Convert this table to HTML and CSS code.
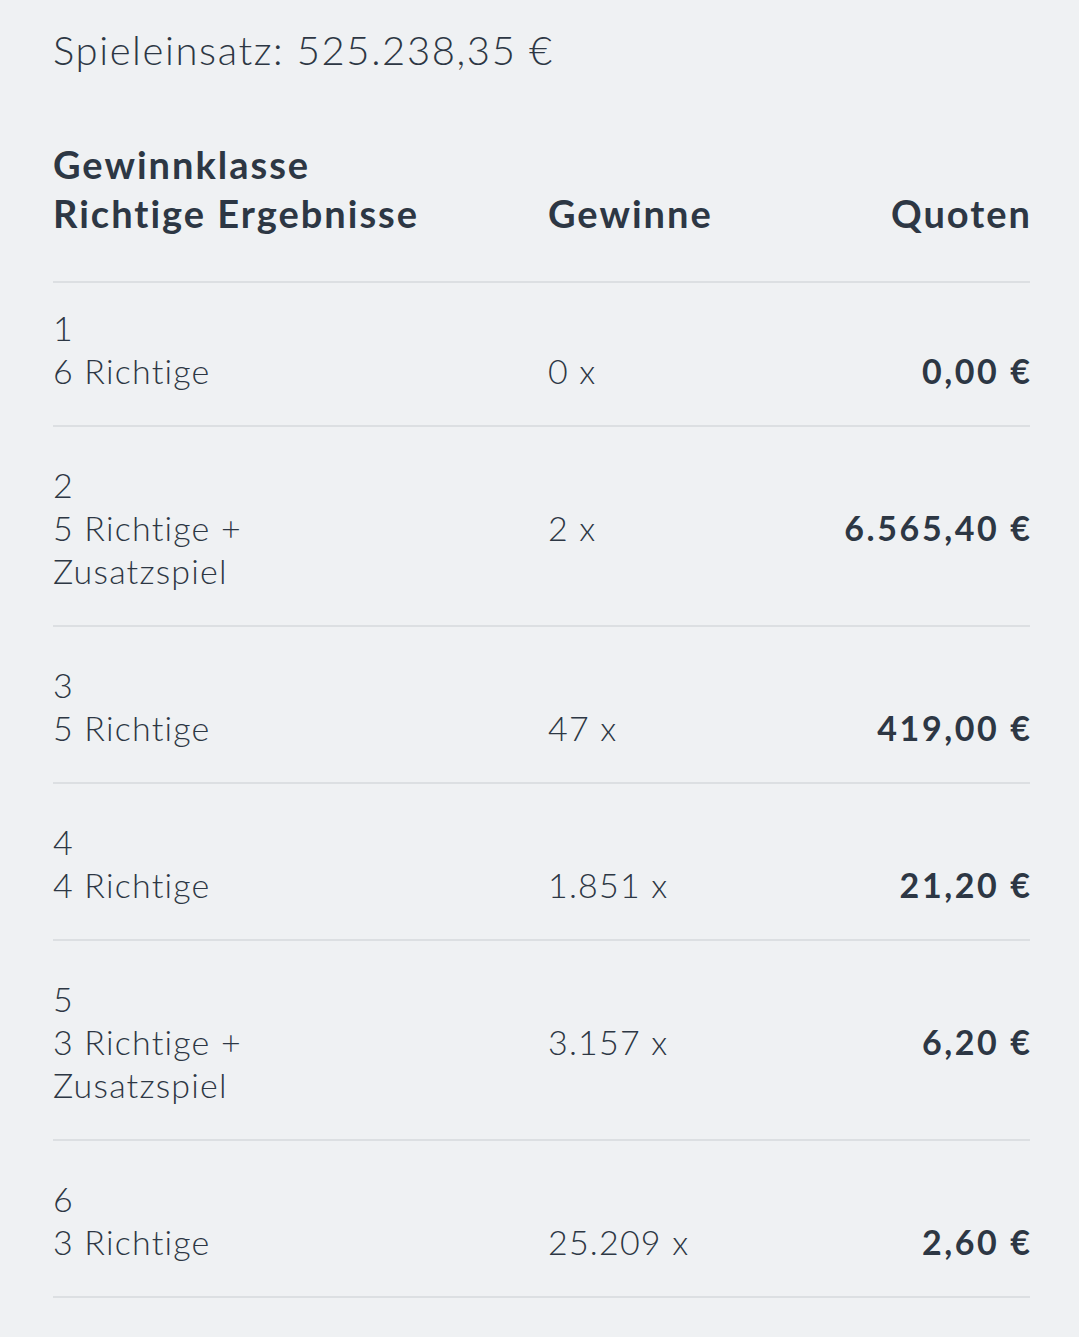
FILE: index.html
```html
<!DOCTYPE html>
<html lang="de">
<head>
<meta charset="utf-8">
<title>Quoten</title>
<link rel="stylesheet" href="styles.css">
</head>
<body>
<main class="page">
  <p class="stake">Spieleinsatz: 525.238,35 €</p>
  <div class="table">
    <div class="head">
      <div class="h-class">Gewinnklasse<br>Richtige Ergebnisse</div>
      <div class="h-count">Gewinne</div>
      <div class="h-quote">Quoten</div>
    </div>
    <div class="row first">
      <div class="num">1</div>
      <div class="desc">6 Richtige</div>
      <div class="count">0 x</div>
      <div class="quote">0,00 €</div>
    </div>
    <div class="row">
      <div class="num">2</div>
      <div class="desc">5 Richtige +<br>Zusatzspiel</div>
      <div class="count">2 x</div>
      <div class="quote">6.565,40 €</div>
    </div>
    <div class="row">
      <div class="num">3</div>
      <div class="desc">5 Richtige</div>
      <div class="count">47 x</div>
      <div class="quote">419,00 €</div>
    </div>
    <div class="row">
      <div class="num">4</div>
      <div class="desc">4 Richtige</div>
      <div class="count">1.851 x</div>
      <div class="quote">21,20 €</div>
    </div>
    <div class="row">
      <div class="num">5</div>
      <div class="desc">3 Richtige +<br>Zusatzspiel</div>
      <div class="count">3.157 x</div>
      <div class="quote">6,20 €</div>
    </div>
    <div class="row">
      <div class="num">6</div>
      <div class="desc">3 Richtige</div>
      <div class="count">25.209 x</div>
      <div class="quote">2,60 €</div>
    </div>
  </div>
</main>
</body>
</html>
```

FILE: styles.css
```css
html, body {
  margin: 0;
  padding: 0;
  background: #eff1f3;
}
body {
  font-family: "Lato", "Liberation Sans", sans-serif;
  color: #2d3744;
}
.page {
  padding: 24px 49px 40px 53px;
}
.stake {
  margin: 0;
  font-size: 40px;
  line-height: 52px;
  font-weight: 300;
  letter-spacing: 1.6px;
}
.table {
  margin-top: 64px;
}
.head {
  display: grid;
  grid-template-columns: 495px 1fr auto;
  align-items: end;
  font-weight: 700;
  font-size: 38px;
  line-height: 49px;
  letter-spacing: 2px;
  padding-bottom: 43px;
  border-bottom: 2px solid #dcdfe2;
}
.h-quote { text-align: right; margin-right: -2px; }
.row {
  display: grid;
  grid-template-columns: 495px 1fr auto;
  grid-template-rows: auto auto;
  font-size: 34px;
  line-height: 43px;
  font-weight: 300;
  letter-spacing: 1.2px;
  padding: 36px 0 33px;
  border-bottom: 2px solid #dcdfe2;
}
.row.first { padding-top: 23px; }
.num { grid-column: 1; grid-row: 1; }
.desc { grid-column: 1; grid-row: 2; }
.count { grid-column: 2; grid-row: 2; }
.quote {
  grid-column: 3;
  grid-row: 2;
  text-align: right;
  font-weight: 700;
  letter-spacing: 2.6px;
  margin-right: -2.6px;
}
```
